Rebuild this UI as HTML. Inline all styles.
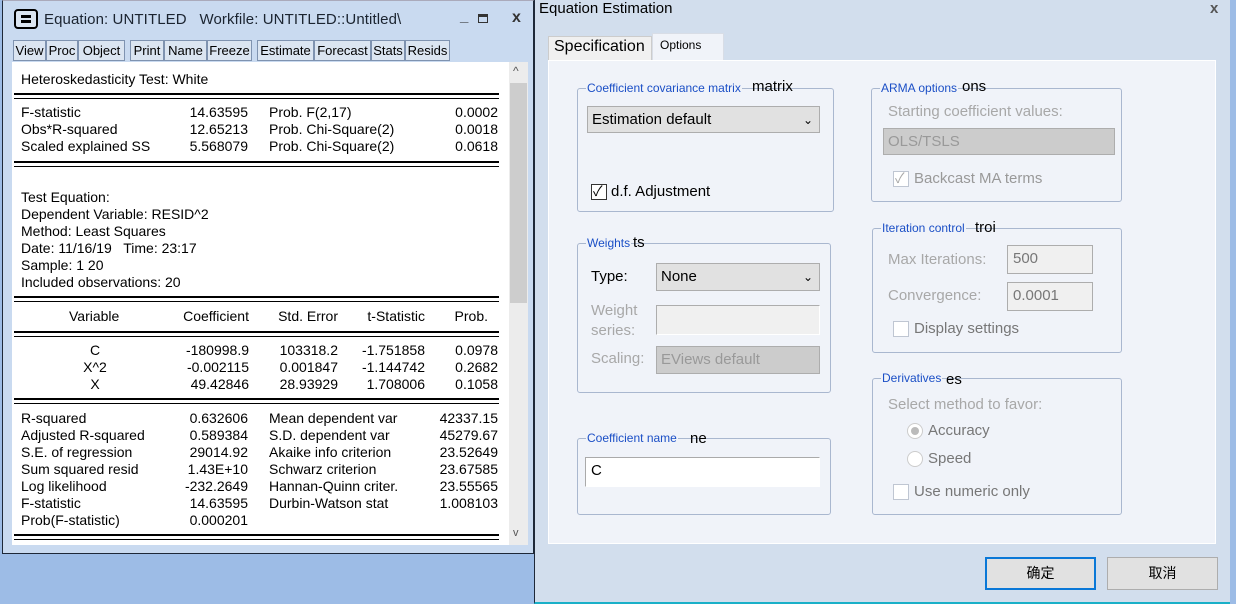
<!DOCTYPE html>
<html><head><meta charset="utf-8"><style>
*{margin:0;padding:0;box-sizing:border-box}
body{width:1236px;height:604px;position:relative;overflow:hidden;background:#9dbce6;font-family:"Liberation Sans","Noto Sans CJK SC",sans-serif}
.a{position:absolute;white-space:nowrap}
.t{font-size:14px;color:#000;line-height:17px}
.r{text-align:right}
.hl{position:absolute;left:14px;width:485px;border-top:2px solid #000;height:6px;border-bottom:1px solid #000}
.btn{position:absolute;top:40px;height:21px;border:1px solid #7f93b0;background:#dbe5f1;font-size:13px;line-height:19px;text-align:center;overflow:hidden}
.gb{position:absolute;border:1px solid #a9b7cf;border-radius:3px}
.gl{position:absolute;top:-9px;left:8px;background:#f0f3f9;color:#1b4fc6;font-size:12px;padding:0 1px;line-height:16px}
.d{font-size:15px;color:#000}
.g{color:#a8a8a8}
.sel{position:absolute;border:1px solid #adadad;background:#e1e1e1;font-size:15px;line-height:26px;padding-left:4px}
.chk{position:absolute;width:16px;height:16px;border:1px solid #bfc6d2;background:#fff}
</style></head><body>
<div class="a" style="left:2px;top:0;width:532px;height:554px;background:#c9daf0;border:1px solid #1e2838;border-top:1px solid #aab"></div>
<div class="a" style="left:14px;top:9px;width:24px;height:20px;border:2px solid #000;border-radius:4px;background:#dbe5f1"></div>
<div class="a" style="left:21px;top:15px;width:10px;height:3px;background:#000"></div>
<div class="a" style="left:21px;top:20px;width:10px;height:3px;background:#000"></div>
<div class="a" style="left:44px;top:11px;font-size:15px;color:#1b2430;letter-spacing:0.1px">Equation: UNTITLED &nbsp; Workfile: UNTITLED::Untitled\</div>
<div class="a" style="left:460px;top:8px;font-size:15px;font-weight:bold;color:#333">_</div>
<div class="a" style="left:478px;top:14px;width:10px;height:9px;border:1px solid #333;border-top:3px solid #333"></div>
<div class="a" style="left:512px;top:9px;font-size:16px;font-weight:bold;color:#333">x</div>
<div class="btn" style="left:13px;width:33px">View</div><div class="btn" style="left:46px;width:32px">Proc</div><div class="btn" style="left:78px;width:47px">Object</div>
<div class="btn" style="left:130px;width:34px">Print</div><div class="btn" style="left:164px;width:43px">Name</div><div class="btn" style="left:207px;width:45px">Freeze</div>
<div class="btn" style="left:257px;width:57px">Estimate</div><div class="btn" style="left:314px;width:57px">Forecast</div><div class="btn" style="left:371px;width:34px">Stats</div><div class="btn" style="left:405px;width:45px">Resids</div>
<div class="a" style="left:12px;top:62px;width:497px;height:483px;background:#fff"></div>
<div class="a" style="left:509px;top:62px;width:19px;height:483px;background:#ececec"></div>
<div class="a" style="left:510px;top:83px;width:17px;height:220px;background:#cdcdcd"></div>
<div class="a" style="left:513px;top:64px;font-size:12px;color:#555">^</div>
<div class="a" style="left:513px;top:527px;font-size:11px;color:#555">v</div>
<div class="a t" style="left:21px;top:71px">Heteroskedasticity Test: White</div>
<div class="hl" style="top:93px"></div>
<div class="a t" style="left:21px;top:104px">F-statistic<br>Obs*R-squared<br>Scaled explained SS</div>
<div class="a t r" style="left:150px;width:98px;top:104px">14.63595<br>12.65213<br>5.568079</div>
<div class="a t" style="left:269px;top:104px">Prob. F(2,17)<br>Prob. Chi-Square(2)<br>Prob. Chi-Square(2)</div>
<div class="a t r" style="left:420px;width:78px;top:104px">0.0002<br>0.0018<br>0.0618</div>
<div class="hl" style="top:161px"></div>
<div class="a t" style="left:21px;top:189px">Test Equation:<br>Dependent Variable: RESID^2<br>Method: Least Squares<br>Date: 11/16/19 &nbsp; Time: 23:17<br>Sample: 1 20<br>Included observations: 20</div>
<div class="hl" style="top:296px"></div>
<div class="a t" style="left:69px;top:308px">Variable</div>
<div class="a t r" style="left:150px;width:99px;top:308px">Coefficient</div>
<div class="a t r" style="left:250px;width:88px;top:308px">Std. Error</div>
<div class="a t r" style="left:330px;width:95px;top:308px">t-Statistic</div>
<div class="a t r" style="left:420px;width:68px;top:308px">Prob.</div>
<div class="hl" style="top:331px"></div>
<div class="a t" style="left:60px;width:70px;text-align:center;top:342px">C<br>X^2<br>X</div>
<div class="a t r" style="left:150px;width:99px;top:342px">-180998.9<br>-0.002115<br>49.42846</div>
<div class="a t r" style="left:250px;width:88px;top:342px">103318.2<br>0.001847<br>28.93929</div>
<div class="a t r" style="left:330px;width:95px;top:342px">-1.751858<br>-1.144742<br>1.708006</div>
<div class="a t r" style="left:420px;width:78px;top:342px">0.0978<br>0.2682<br>0.1058</div>
<div class="hl" style="top:398px"></div>
<div class="a t" style="left:21px;top:410px">R-squared<br>Adjusted R-squared<br>S.E. of regression<br>Sum squared resid<br>Log likelihood<br>F-statistic<br>Prob(F-statistic)</div>
<div class="a t r" style="left:150px;width:98px;top:410px">0.632606<br>0.589384<br>29014.92<br>1.43E+10<br>-232.2649<br>14.63595<br>0.000201</div>
<div class="a t" style="left:269px;top:410px">Mean dependent var<br>S.D. dependent var<br>Akaike info criterion<br>Schwarz criterion<br>Hannan-Quinn criter.<br>Durbin-Watson stat</div>
<div class="a t r" style="left:400px;width:98px;top:410px">42337.15<br>45279.67<br>23.52649<br>23.67585<br>23.55565<br>1.008103</div>
<div class="hl" style="top:534px"></div>
<!-- dialog -->
<div class="a" style="left:534px;top:0;width:696px;height:604px;background:#d2deed;border-left:1px solid #1e2838;border-bottom:2px solid #1ab0c8"></div>
<div class="a" style="left:539px;top:0;font-size:15px;color:#000">Equation Estimation</div>
<div class="a" style="left:1210px;top:0;font-size:15px;color:#555;font-weight:bold">x</div>
<div class="a" style="left:548px;top:36px;width:104px;height:25px;background:#f0f0f0;border:1px solid #ccc;border-bottom:none"></div>
<div class="a" style="left:554px;top:38px;font-size:16px">Specification</div>
<div class="a" style="left:652px;top:33px;width:72px;height:28px;background:#f0f3f9;border:1px solid #d8dde6;border-bottom:none"></div>
<div class="a" style="left:660px;top:38px;font-size:12px">Options</div>
<div class="a" style="left:548px;top:60px;width:668px;height:484px;background:#f0f3f9;border:1px solid #fff"></div>

<div class="gb" style="left:577px;top:88px;width:257px;height:124px"><div class="gl">Coefficient covariance matrix</div></div>
<div class="a" style="left:752px;top:78px;font-size:15px">matrix</div>
<div class="sel" style="left:587px;top:106px;width:233px;height:27px">Estimation default<span style="position:absolute;right:6px;top:0;font-size:12px">&#8964;</span></div>
<div class="chk" style="left:591px;top:184px;border-color:#333"></div><div class="a" style="left:593px;top:181px;font-size:14px">✓</div>
<div class="a d" style="left:611px;top:183px">d.f. Adjustment</div>

<div class="gb" style="left:871px;top:88px;width:251px;height:114px"><div class="gl">ARMA options</div></div>
<div class="a" style="left:962px;top:78px;font-size:15px">ons</div>
<div class="a d g" style="left:888px;top:103px">Starting coefficient values:</div>
<div class="sel g" style="left:883px;top:128px;width:232px;height:27px;background:#ccc;color:#999">OLS/TSLS</div>
<div class="chk" style="left:893px;top:171px"></div><div class="a g" style="left:895px;top:168px;font-size:14px">✓</div>
<div class="a d g" style="left:914px;top:170px;color:#999">Backcast MA terms</div>

<div class="gb" style="left:577px;top:243px;width:254px;height:150px"><div class="gl">Weights</div></div>
<div class="a" style="left:633px;top:234px;font-size:15px">ts</div>
<div class="a d" style="left:591px;top:268px">Type:</div>
<div class="sel" style="left:656px;top:263px;width:164px;height:28px">None<span style="position:absolute;right:6px;top:0;font-size:12px">&#8964;</span></div>
<div class="a d g" style="left:591px;top:301px;line-height:20px">Weight<br>series:</div>
<div class="a" style="left:656px;top:305px;width:164px;height:30px;background:#f0f0f0;border:1px solid #adadad;border-right-color:#fff;border-bottom-color:#fff"></div>
<div class="a d g" style="left:591px;top:350px">Scaling:</div>
<div class="sel" style="left:656px;top:346px;width:164px;height:28px;background:#ccc;color:#999">EViews default</div>

<div class="gb" style="left:872px;top:228px;width:250px;height:125px"><div class="gl">Iteration control</div></div>
<div class="a" style="left:975px;top:219px;font-size:15px">troi</div>
<div class="a d g" style="left:888px;top:251px">Max Iterations:</div>
<div class="a d" style="left:1007px;top:245px;width:86px;height:29px;background:#f0f0f0;border:1px solid #adadad;padding:4px 5px;color:#777">500</div>
<div class="a d g" style="left:888px;top:287px">Convergence:</div>
<div class="a d" style="left:1007px;top:282px;width:86px;height:29px;background:#f0f0f0;border:1px solid #adadad;padding:4px 5px;color:#777">0.0001</div>
<div class="chk" style="left:893px;top:321px"></div>
<div class="a d" style="left:914px;top:320px;color:#777">Display settings</div>

<div class="gb" style="left:872px;top:378px;width:250px;height:137px"><div class="gl">Derivatives</div></div>
<div class="a" style="left:946px;top:371px;font-size:15px">es</div>
<div class="a d g" style="left:888px;top:396px">Select method to favor:</div>
<div class="a" style="left:907px;top:423px;width:16px;height:16px;border-radius:50%;border:1px solid #ccc;background:#fff"></div>
<div class="a" style="left:911px;top:427px;width:8px;height:8px;border-radius:50%;background:#bbb"></div>
<div class="a d" style="left:928px;top:422px;color:#777">Accuracy</div>
<div class="a" style="left:907px;top:451px;width:16px;height:16px;border-radius:50%;border:1px solid #ccc;background:#fff"></div>
<div class="a d" style="left:928px;top:450px;color:#777">Speed</div>
<div class="chk" style="left:893px;top:484px"></div>
<div class="a d" style="left:914px;top:483px;color:#777">Use numeric only</div>

<div class="gb" style="left:577px;top:438px;width:254px;height:77px"><div class="gl">Coefficient name</div></div>
<div class="a" style="left:690px;top:430px;font-size:15px">ne</div>
<div class="a d" style="left:585px;top:457px;width:235px;height:30px;background:#fff;border:1px solid #aaa;border-right-color:#fff;border-bottom-color:#fff;padding:4px 5px">C</div>

<div class="a" style="left:985px;top:557px;width:111px;height:33px;border:2px solid #0a78d7;background:#e1e1e1;font-size:14px;text-align:center;line-height:29px">确定</div>
<div class="a" style="left:1107px;top:557px;width:111px;height:33px;border:1px solid #adadad;background:#e1e1e1;font-size:14px;text-align:center;line-height:31px">取消</div>
</body></html>
